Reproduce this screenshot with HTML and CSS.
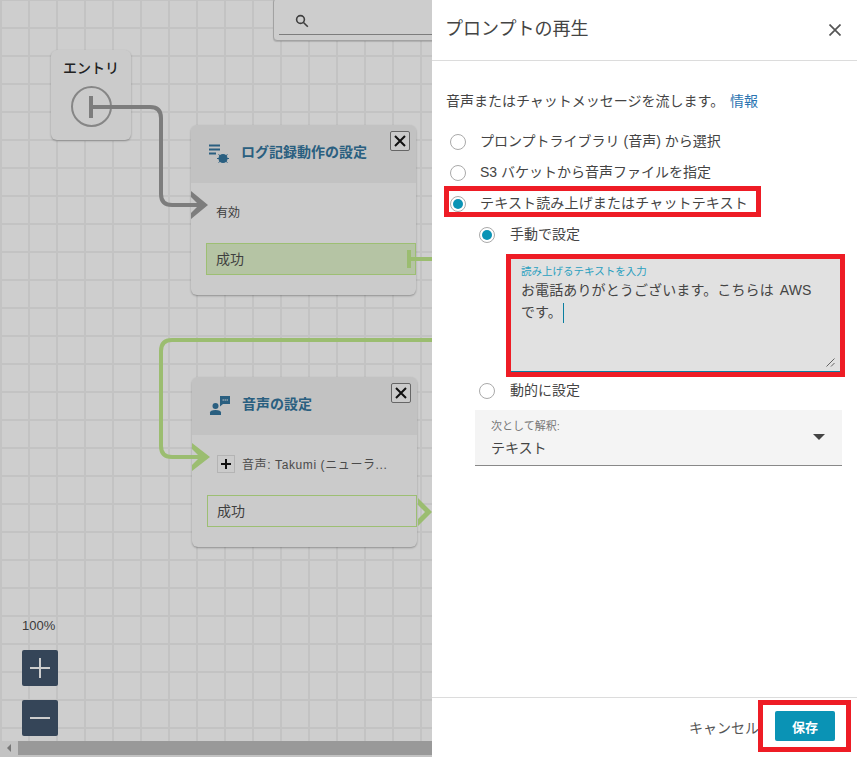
FILE: index.html
```html
<!DOCTYPE html>
<html lang="ja">
<head>
<meta charset="utf-8">
<title>プロンプトの再生</title>
<link rel="stylesheet" href="styles.css">
</head>
<body>
<div class="app">
  <main class="canvas">
    <div class="search">
      <svg class="search-icon" viewBox="0 0 14 14"><circle cx="5.5" cy="5.5" r="3.9"/><path d="M8.5 8.5 12.8 12.8"/></svg>
      <div class="search-line"></div>
    </div>

    <svg class="wires" viewBox="0 0 432 757">
      <g class="wire-gray">
        <path d="M91 107H150Q161 107 161 118V194Q161 205 172 205H204"/>
        <path class="bar" d="M91 96V118"/>
      </g>
      <path class="tip-gray" d="M191 191 208 205 191 219V213L199 205 191 197Z"/>
      <g class="wire-green">
        <path d="M432 340H172Q161 340 161 351V446Q161 457 172 457H206"/>
        <path d="M410 259H432"/>
        <path class="bar" d="M409 250V268"/>
      </g>
      <path class="tip-green" d="M192 443 210 457 192 471V465L200 457 192 449Z"/>
    </svg>

    <section class="node entry">
      <div class="entry-title">エントリ</div>
      <div class="entry-circle"></div>
    </section>

    <section class="node block log">
      <header class="block-head">
        <svg class="block-icon" viewBox="0 0 22 22">
          <path class="lines" d="M1 2.5H12M1 6.500H12M1 10.500H8"/>
          <circle class="bug" cx="15" cy="15.500" r="4.600"/>
          <path class="legs" d="M10.500 11.500 12.500 13M19.500 11.500 17.500 13M9 15.500H11M21 15.500H19M10.500 19.500 12.500 18M19.500 19.500 17.500 18"/>
        </svg>
        <h2 class="block-title">ログ記録動作の設定</h2>
        <button class="block-close"><svg viewBox="0 0 12 12"><path d="M1 1 11 11M11 1 1 11"/></svg></button>
      </header>
      <div class="block-body">
        <div class="param">有効</div>
        <div class="branch branch-on">成功</div>
      </div>
    </section>

    <section class="node block voice">
      <header class="block-head">
        <svg class="block-icon" viewBox="0 0 22 22">
          <circle class="fill" cx="6.500" cy="11" r="3"/>
          <path class="fill" d="M1 20V17.500Q1 15 6.500 15 12 15 12 17.500V20Z"/>
          <path class="fill" d="M11 1H21V9H14L11 11.500Z"/>
          <path class="dots" d="M13.500 5H15M15.500 5H17M17.500 5H19"/>
        </svg>
        <h2 class="block-title">音声の設定</h2>
        <button class="block-close"><svg viewBox="0 0 12 12"><path d="M1 1 11 11M11 1 1 11"/></svg></button>
      </header>
      <div class="block-body">
        <div class="param param-voice">
          <span class="plus-box"><svg viewBox="0 0 12 12"><path d="M1 6H11M6 1V11"/></svg></span>
          <span class="voice-name">音声: Takumi (ニューラ...</span>
        </div>
        <div class="branch">成功</div>
      </div>
    </section>

    <svg class="out-tip" viewBox="0 0 14 32"><path d="M0 2 14 16 0 30V23L7 16 0 9Z"/></svg>

    <div class="zoom-tools">
      <div class="zoom-level">100%</div>
      <button class="zoom-btn"><svg viewBox="0 0 20 20"><path d="M0 10H20M10 0V20"/></svg></button>
      <button class="zoom-btn"><svg viewBox="0 0 20 20"><path d="M0 10H20"/></svg></button>
    </div>

    <div class="scrollbar">
      <div class="scroll-arrow"></div>
      <div class="scroll-thumb"></div>
    </div>
  </main>

  <aside class="panel">
    <header class="panel-head">
      <h1 class="panel-title">プロンプトの再生</h1>
      <svg class="panel-close" viewBox="0 0 12 12"><path d="M0.500 0.500 11.500 11.500M11.500 0.500 0.500 11.500"/></svg>
    </header>
    <div class="panel-body">
      <p class="desc">音声またはチャットメッセージを流します。 <a class="info">情報</a></p>
      <div class="radio-row row-1"><span class="radio"></span><span class="radio-label">プロンプトライブラリ (音声) から選択</span></div>
      <div class="radio-row row-2"><span class="radio"></span><span class="radio-label">S3 バケットから音声ファイルを指定</span></div>
      <div class="radio-row row-3 highlighted"><span class="radio on"></span><span class="radio-label wide">テキスト読み上げまたはチャットテキスト</span></div>
      <div class="radio-row sub row-4"><span class="radio on"></span><span class="radio-label">手動で設定</span></div>
      <div class="textarea">
        <div class="textarea-label">読み上げるテキストを入力</div>
        <div class="textarea-text">お電話ありがとうございます。こちらは AWS<br>です。<span class="caret"></span></div>
        <svg class="resize" viewBox="0 0 9 9"><path d="M0.500 8.500 8.500 0.500M5 8.500 8.500 5"/></svg>
      </div>
      <div class="radio-row sub row-5"><span class="radio"></span><span class="radio-label">動的に設定</span></div>
      <div class="select">
        <div class="select-label">次として解釈:</div>
        <div class="select-value">テキスト</div>
        <span class="select-arrow"></span>
      </div>
    </div>
    <footer class="panel-foot">
      <span class="cancel">キャンセル</span>
      <div class="save-mark"><button class="save">保存</button></div>
    </footer>
  </aside>
</div>
</body>
</html>
```
FILE: styles.css
```css
*, *::before, *::after { box-sizing: border-box; }
html, body { margin: 0; padding: 0; height: 100%; overflow: hidden; background: #fff; }
body { font-family: "Liberation Sans", "Noto Sans CJK JP", sans-serif; color: #444; font-size: 14px; }
h1, h2, p { margin: 0; font-weight: normal; }
button { padding: 0; font: inherit; }

.app { display: flex; width: 857px; height: 757px; }

/* canvas */
.canvas {
  position: relative;
  flex: 0 0 432px;
  height: 757px;
  overflow: hidden;
  background-color: #cecece;
  background-image:
    repeating-linear-gradient(90deg, #c3c3c3 0 2px, transparent 2px 28px),
    repeating-linear-gradient(180deg, #c3c3c3 0 2px, transparent 2px 28px);
  background-position: 0 0, 0 -1px;
}
.search {
  position: absolute; left: 273px; top: -2px; width: 170px; height: 43px;
  border: 1px solid #a2a2a2; border-radius: 4px; background: #cdcdcd;
  box-shadow: 0 1px 1px rgba(0,0,0,.15);
}
.search-icon { position: absolute; left: 21px; top: 15px; width: 14px; height: 14px; fill: none; stroke: #3f3f3f; stroke-width: 1.6; }
.search-line { position: absolute; left: 5px; right: 0; top: 35px; height: 1px; background: #7c7c7c; }

.wires { position: absolute; left: 0; top: 0; width: 432px; height: 757px; z-index: 2; pointer-events: none; }
.wires path { fill: none; }
.wire-gray path { stroke: #7d7d7d; stroke-width: 4; }
.wire-green path { stroke: #9bbd70; stroke-width: 4; }
.wires .tip-gray { fill: #7d7d7d; }
.wires .tip-green { fill: #9bbd70; }

.node {
  position: absolute; background: #cbcbcb; border-radius: 6px;
  box-shadow: 0 1px 2px rgba(0,0,0,.3);
}
.entry { left: 51px; top: 50px; width: 80px; height: 90px; text-align: center; }
.entry-title { margin-top: 8px; font-size: 14px; line-height: 20px; color: #222; font-weight: 500; }
.entry-circle { position: absolute; left: 20px; top: 36px; width: 41px; height: 41px; border: 2px solid #868686; border-radius: 50%; }

.block { width: 225px; height: 170px; overflow: hidden; }
.log { left: 191px; top: 125px; }
.voice { left: 192px; top: 377px; }
.block-head { position: relative; display: flex; align-items: center; height: 58px; padding: 0 0 5px 17px; background: #c2c2c2; }
.block-icon { flex: none; width: 22px; height: 22px; margin-top: 5px; }
.block-icon .lines { fill: none; stroke: #2a5f80; stroke-width: 1.800; }
.block-icon .bug, .block-icon .fill { fill: #2a5f80; }
.block-icon .legs { fill: none; stroke: #2a5f80; stroke-width: 1; }
.block-icon .dots { fill: none; stroke: #c2c2c2; stroke-width: 1; }
.block-title { margin-left: 11px; font-size: 14px; font-weight: 700; line-height: 20px; color: #2a5f80; }
.block-close {
  position: absolute; left: 199px; top: 6px; width: 20px; height: 20px;
  display: flex; align-items: center; justify-content: center;
  border: 1px solid #666; border-radius: 2px; background: #cbcbcb;
}
.block-close svg { width: 12px; height: 12px; fill: none; stroke: #111; stroke-width: 2; }
.block-body { padding: 0 0 0 15px; }
.param { display: flex; align-items: center; height: 60px; padding: 0 0 3px 10px; font-size: 12px; color: #3c3c3c; }
.param-voice { padding-left: 10px; gap: 7px; color: #4a4a4a; }
.voice-name { letter-spacing: .6px; white-space: nowrap; }
.plus-box { display: flex; align-items: center; justify-content: center; width: 18px; height: 18px; border: 1px solid #b4b4b4; }
.plus-box svg { width: 12px; height: 12px; fill: none; stroke: #111; stroke-width: 2; }
.branch {
  display: flex; align-items: center; height: 32px; padding: 0 0 2px 9px;
  border: 1px solid #9dbf73; font-size: 14px; color: #3f3f3f;
}
.branch-on { background: #b5c4a4; }
.out-tip { position: absolute; left: 418px; top: 496px; width: 14px; height: 32px; fill: #9bbd70; z-index: 3; }

.zoom-tools { position: absolute; left: 22px; top: 618px; width: 36px; display: flex; flex-direction: column; }
.zoom-level { height: 32px; font-size: 13px; line-height: 16px; color: #3a3a3a; white-space: nowrap; }
.zoom-btn {
  display: flex; align-items: center; justify-content: center;
  width: 36px; height: 36px; margin-bottom: 14px;
  background: #354558; border: 0; border-radius: 2px;
}
.zoom-btn svg { width: 20px; height: 20px; fill: none; stroke: #cdcdcd; stroke-width: 2; }

.scrollbar { position: absolute; left: 0; right: 0; top: 741px; height: 14px; display: flex; background: #c3c3c3; }
.scroll-arrow { width: 18px; position: relative; }
.scroll-arrow::before {
  content: ""; position: absolute; left: 7px; top: 3px; width: 0; height: 0;
  border-style: solid; border-width: 4px 4px 4px 0; border-color: transparent #777 transparent transparent;
}
.scroll-thumb { flex: 1; background: #999; }

/* panel */
.panel { position: relative; flex: 0 0 425px; height: 757px; display: flex; flex-direction: column; background: #fff; }
.panel-head { display: flex; align-items: center; justify-content: space-between; height: 61px; padding: 0 19px 3px 13px; border-bottom: 1px solid #dcdcdc; }
.panel-title { font-size: 18px; line-height: 26px; color: #444; }
.panel-close { width: 12px; height: 12px; margin-top: 3px; fill: none; stroke: #555; stroke-width: 1.700; }
.panel-body { flex: 1; padding: 0 15px 0 14px; }
.desc { margin-top: 30px; height: 20px; font-size: 14px; line-height: 20px; color: #444; white-space: pre-wrap; }
.info { margin-left: 2px; color: #2b74b1; }
.radio-row { position: relative; display: flex; align-items: center; height: 31px; gap: 14px; padding-left: 4px; font-size: 14px; color: #444; white-space: nowrap; }
.radio-label { margin-bottom: 4px; }
.radio-label.wide { letter-spacing: .15px; }
.row-1 { margin-top: 15px; }
.sub { padding-left: 33px; gap: 15px; }
.radio { flex: none; width: 16px; height: 16px; border: 1px solid #aaa; border-radius: 50%; background: #fff; position: relative; }
.radio.on::after { content: ""; position: absolute; left: 2px; top: 2px; width: 10px; height: 10px; border-radius: 50%; background: #0a93b5; }
.highlighted::before {
  content: ""; position: absolute; left: -2px; top: -2px; width: 317px; height: 31px;
  border: 5px solid #ee1c25; z-index: 2;
}

.textarea {
  position: relative; margin: 4px 0 0 60px; width: 339px; height: 123px;
  padding: 5px 0 0 10px;
  background: #e1e1e1; border: 5px solid #ee1c25;
  box-shadow: inset 0 -1px 0 #0a7ea0;
}
.textarea-label { font-size: 10.500px; line-height: 14px; color: #2a9fbf; white-space: nowrap; }
.textarea-text { margin-top: 1px; font-size: 14px; line-height: 22px; color: #444; white-space: nowrap; word-spacing: 2px; letter-spacing: .12px; }
.caret { display: inline-block; width: 1px; height: 20px; margin-left: 1px; vertical-align: middle; background: #0a7ea0; }
.resize { position: absolute; right: 5px; bottom: 5px; width: 9px; height: 9px; fill: none; stroke: #444; stroke-width: .8; }
.row-5 { margin-top: -1px; height: 29px; }
.select {
  position: relative; margin: 5px 0 0 29px; width: 367px; height: 56px;
  padding: 8px 0 0 16px; background: #f4f4f4; border-bottom: 1px solid #888;
}
.select-label { font-size: 11px; line-height: 16px; color: #777; }
.select-value { margin-top: 3px; font-size: 14px; line-height: 22px; color: #444; }
.select-arrow {
  position: absolute; left: 338px; top: 24px; width: 0; height: 0;
  border-style: solid; border-width: 6px 6px 0; border-color: #444 transparent transparent;
}

.panel-foot { position: relative; display: flex; align-items: center; height: 60px; padding-left: 257px; border-top: 1px solid #dcdcdc; }
.cancel { font-size: 14px; line-height: 20px; color: #555; white-space: nowrap; }
.save-mark {
  position: absolute; left: 326px; top: 2px; width: 93px; height: 52px;
  border: 5px solid #ee1c25; display: flex; align-items: center; justify-content: flex-end;
}
.save { width: 60px; height: 30px; margin-right: 11px; background: #0a93b5; color: #fff; border: 0; border-radius: 2px; font-size: 13px; font-weight: 700; }
```
